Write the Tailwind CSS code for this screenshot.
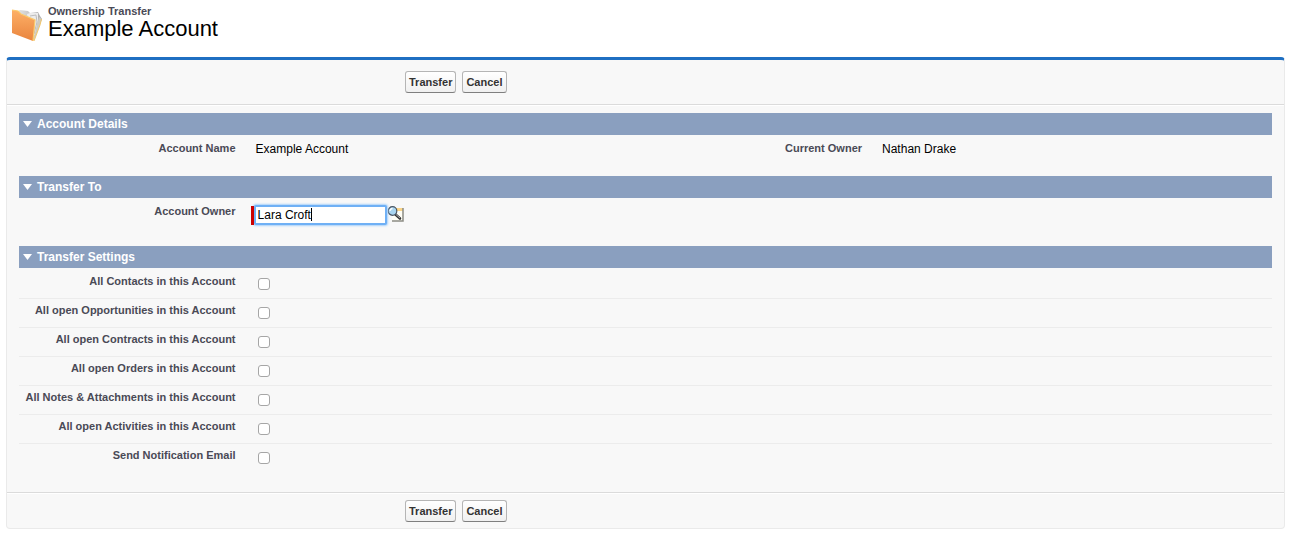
<!DOCTYPE html>
<html lang="en">
<head>
    <meta charset="UTF-8">
    <meta name="viewport" content="width=device-width, initial-scale=1.0">
    <title>Ownership Transfer</title>
    <script src="https://cdn.jsdelivr.net/npm/@tailwindcss/browser@4"></script>
</head>
<body class="bg-white px-1.5 pb-2 font-['Liberation_Sans',Arial,sans-serif] text-xs text-black">
    <!-- Page title -->
    <header class="flex gap-1.5 pt-1 pl-1 h-[57px]">
        <svg class="mt-1 h-9 w-8" viewBox="0 0 32 36" aria-hidden="true">
            <defs>
                <linearGradient id="folderFront" x1="0" y1="0" x2="0" y2="1">
                    <stop offset="0" stop-color="#fdb067"></stop>
                    <stop offset="1" stop-color="#e9843e"></stop>
                </linearGradient>
                <linearGradient id="folderBack" x1="0" y1="0" x2="1" y2="0">
                    <stop offset="0" stop-color="#e4e4e4"></stop>
                    <stop offset="1" stop-color="#a9a9a9"></stop>
                </linearGradient>
            </defs>
            <path d="M8 3 L10 2 L18 3 L20 5 L28 4 L30 8 L32 11 L24 32 L15 20 Z" fill="url(#folderBack)"></path>
            <path d="M17 6 L20 5 L28 5 L28 12 L26 25 L22 31 Z" fill="#ececec"></path>
            <path d="M20 8 L26 7 L27 14 L24 26" stroke="#bdbdbd" stroke-width="1" fill="none"></path>
            <path d="M29 9 L32 11 L25 30 L23 33 Z" fill="#cfcbc0"></path>
            <path d="M31.500 11 L30 17 L24 33" stroke="#f3c76b" stroke-width="1" fill="none"></path>
            <path d="M2 2 L8 3 L11 6 L25 12 L23 33 L2 25 Z" fill="url(#folderFront)"></path>
            <path d="M2 2 L8 3 L11 6 L25 12 L23 33" stroke="#fbc96b" stroke-width="1.200" fill="none"></path>
        </svg>
        <div>
            <p class="text-[11px] leading-[14px] font-bold text-[#4a4a56]">Ownership Transfer</p>
            <h1 class="text-[22px] leading-[22px]">Example Account</h1>
        </div>
    </header>

    <form class="rounded-[4px] border border-t-3 border-[#eaeaea] border-t-[#1f6fc2] bg-[#f8f8f8]">
        <!-- Top buttons -->
        <div class="flex gap-1.5 border-b border-[#dbdbdb] py-[11px] pl-[398px]">
            <button type="button" class="h-[22px] rounded-[3px] border border-[#b5b5b5] border-b-[#7f7f7f] bg-linear-to-b from-white to-[#f0f0f0] px-[3px] text-[11px] leading-5 font-bold text-[#333]">Transfer</button>
            <button type="button" class="h-[22px] rounded-[3px] border border-[#b5b5b5] border-b-[#7f7f7f] bg-linear-to-b from-white to-[#f0f0f0] px-[3px] text-[11px] leading-5 font-bold text-[#333]">Cancel</button>
        </div>

        <div class="border-t border-white px-3 pt-[7px] pb-[9px]">
            <!-- Account Details -->
            <section class="mb-2.5">
                <h2 class="flex h-[22px] items-center gap-[5px] bg-[#8a9fbf] pl-1 font-bold text-white">
                    <svg class="h-2 w-[9px]" viewBox="0 0 9 8" fill="currentColor" aria-hidden="true"><path d="M0 1h9L4.500 7z"></path></svg>
                    Account Details
                </h2>
                <dl class="flex pt-0.5">
                    <div class="flex h-[29px] w-1/2">
                        <dt class="w-[36%] pr-[9px] text-right text-[11px] leading-[22px] font-bold text-[#4a4a56]">Account Name</dt>
                        <dd class="pl-[11px] leading-6">Example Account</dd>
                    </div>
                    <div class="flex h-[29px] w-1/2">
                        <dt class="w-[36%] pr-[9px] text-right text-[11px] leading-[22px] font-bold text-[#4a4a56]">Current Owner</dt>
                        <dd class="pl-[11px] leading-6">Nathan Drake</dd>
                    </div>
                </dl>
            </section>

            <!-- Transfer To -->
            <section class="mb-2.5">
                <h2 class="flex h-[22px] items-center gap-[5px] bg-[#8a9fbf] pl-1 font-bold text-white">
                    <svg class="h-2 w-[9px]" viewBox="0 0 9 8" fill="currentColor" aria-hidden="true"><path d="M0 1h9L4.500 7z"></path></svg>
                    Transfer To
                </h2>
                <div class="flex h-[38px] pt-0.5">
                    <label for="owner" class="w-[18%] pr-[9px] text-right text-[11px] leading-[22px] font-bold text-[#4a4a56]">Account Owner</label>
                    <div class="flex items-start pt-[5px] pl-1.5">
                        <!-- required marker -->
                        <span class="z-10 mt-px h-[19px] w-[3px] bg-[#c00]"></span>
                        <div class="relative">
                            <input type="text" id="owner" name="owner" value="Lara Croft" class="block h-5 w-[133px] rounded-[2px] border-2 border-[#6fb0f5] bg-white pl-0.5 text-xs shadow-[0_0_2px_1px_#a9d1fa] outline-none">
                            <span class="absolute top-[3px] left-[57px] h-[13px] w-px bg-black"></span>
                        </div>
                        <button type="button" aria-label="Owner Lookup" class="mt-px">
                            <svg class="h-4 w-[17px]" viewBox="0 0 17 16" aria-hidden="true">
                                <path d="M6 3h10v12H5v-5z" fill="#fffef5"></path>
                                <path d="M8 2h8v3H8z" fill="#fbd588"></path>
                                <path d="M16 2v13H5" stroke="#8c8c84" stroke-width="1.500" fill="none"></path>
                                <path d="M8.500 8.500 L13 12.500" stroke="#333" stroke-width="2.600" stroke-linecap="round"></path>
                                <path d="M9 8.500 L13 12" stroke="#aaa" stroke-width="1"></path>
                                <circle cx="5.500" cy="5" r="4.300" fill="#a9d5f0" stroke="#4a5663" stroke-width="1.200"></circle>
                                <path d="M3 5a2.500 2.500 0 0 1 2.500-2.500" stroke="#fff" stroke-width="1.300" fill="none"></path>
                            </svg>
                        </button>
                    </div>
                </div>
            </section>

            <!-- Transfer Settings -->
            <section class="mb-2.5">
                <h2 class="flex h-[22px] items-center gap-[5px] bg-[#8a9fbf] pl-1 font-bold text-white">
                    <svg class="h-2 w-[9px]" viewBox="0 0 9 8" fill="currentColor" aria-hidden="true"><path d="M0 1h9L4.500 7z"></path></svg>
                    Transfer Settings
                </h2>
                <div class="pt-0.5 text-[11px] leading-[22px] font-bold text-[#4a4a56]">
                    <div class="flex h-[29px] border-b border-[#ececec]">
                        <label for="contacts" class="w-[18%] pr-[9px] text-right whitespace-nowrap">All Contacts in this Account</label>
                        <input type="checkbox" id="contacts" class="mt-2 ml-[13px] size-3 appearance-none rounded-[3px] border border-[#a6a6a6] bg-white checked:bg-[#6fb0f5]">
                    </div>
                    <div class="flex h-[29px] border-b border-[#ececec]">
                        <label for="opportunities" class="w-[18%] pr-[9px] text-right whitespace-nowrap">All open Opportunities in this Account</label>
                        <input type="checkbox" id="opportunities" class="mt-2 ml-[13px] size-3 appearance-none rounded-[3px] border border-[#a6a6a6] bg-white checked:bg-[#6fb0f5]">
                    </div>
                    <div class="flex h-[29px] border-b border-[#ececec]">
                        <label for="contracts" class="w-[18%] pr-[9px] text-right whitespace-nowrap">All open Contracts in this Account</label>
                        <input type="checkbox" id="contracts" class="mt-2 ml-[13px] size-3 appearance-none rounded-[3px] border border-[#a6a6a6] bg-white checked:bg-[#6fb0f5]">
                    </div>
                    <div class="flex h-[29px] border-b border-[#ececec]">
                        <label for="orders" class="w-[18%] pr-[9px] text-right whitespace-nowrap">All open Orders in this Account</label>
                        <input type="checkbox" id="orders" class="mt-2 ml-[13px] size-3 appearance-none rounded-[3px] border border-[#a6a6a6] bg-white checked:bg-[#6fb0f5]">
                    </div>
                    <div class="flex h-[29px] border-b border-[#ececec]">
                        <label for="notes" class="w-[18%] pr-[9px] text-right whitespace-nowrap">All Notes &amp; Attachments in this Account</label>
                        <input type="checkbox" id="notes" class="mt-2 ml-[13px] size-3 appearance-none rounded-[3px] border border-[#a6a6a6] bg-white checked:bg-[#6fb0f5]">
                    </div>
                    <div class="flex h-[29px] border-b border-[#ececec]">
                        <label for="activities" class="w-[18%] pr-[9px] text-right whitespace-nowrap">All open Activities in this Account</label>
                        <input type="checkbox" id="activities" class="mt-2 ml-[13px] size-3 appearance-none rounded-[3px] border border-[#a6a6a6] bg-white checked:bg-[#6fb0f5]">
                    </div>
                    <div class="flex h-[29px]">
                        <label for="email" class="w-[18%] pr-[9px] text-right whitespace-nowrap">Send Notification Email</label>
                        <input type="checkbox" id="email" class="mt-2 ml-[13px] size-3 appearance-none rounded-[3px] border border-[#a6a6a6] bg-white checked:bg-[#6fb0f5]">
                    </div>
                </div>
            </section>
        </div>

        <!-- Bottom buttons -->
        <div class="border-t border-[#dbdbdb]">
            <div class="flex gap-1.5 border-t border-white py-1.5 pl-[398px]">
                <button type="button" class="h-[22px] rounded-[3px] border border-[#b5b5b5] border-b-[#7f7f7f] bg-linear-to-b from-white to-[#f0f0f0] px-[3px] text-[11px] leading-5 font-bold text-[#333]">Transfer</button>
                <button type="button" class="h-[22px] rounded-[3px] border border-[#b5b5b5] border-b-[#7f7f7f] bg-linear-to-b from-white to-[#f0f0f0] px-[3px] text-[11px] leading-5 font-bold text-[#333]">Cancel</button>
            </div>
        </div>
    </form>
</body>
</html>
